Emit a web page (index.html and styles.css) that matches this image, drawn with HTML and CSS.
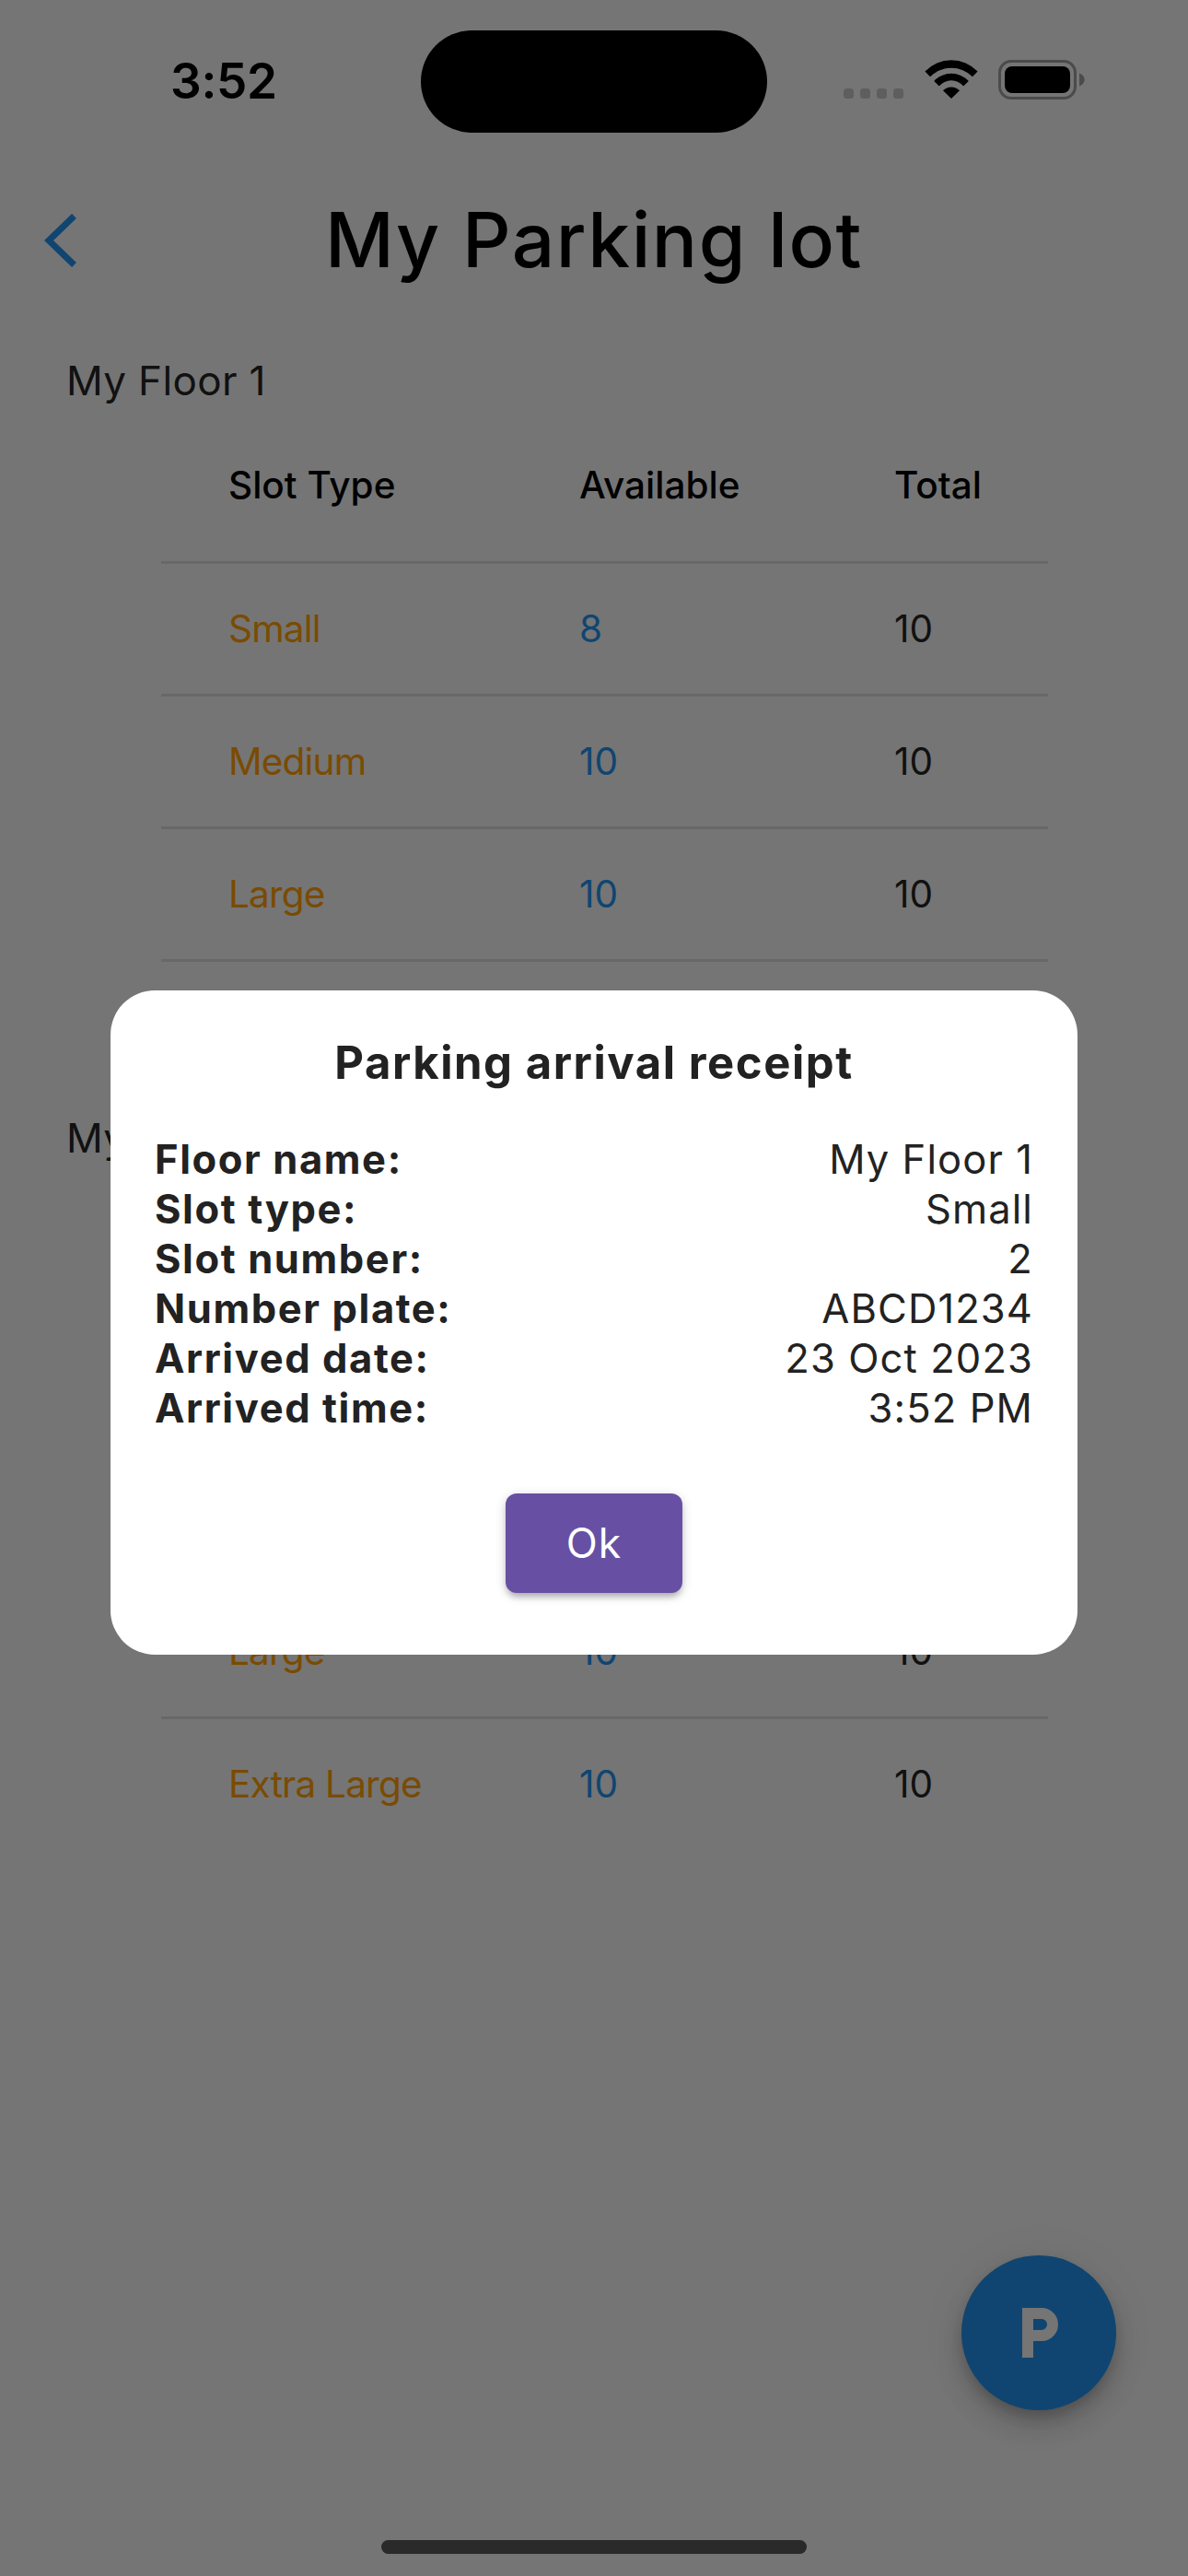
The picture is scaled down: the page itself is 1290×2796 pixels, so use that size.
FILE: index.html
```html
<!DOCTYPE html>
<html lang="en">
<head>
<meta charset="utf-8">
<title>My Parking lot</title>
<link rel="stylesheet" href="styles.css">
</head>
<body>
<div class="screen">
  <header class="status">
    <span class="clock">3:52</span>
    <span class="island"></span>
    <svg class="signal" width="70" height="20" viewBox="0 0 70 20"><g fill="#5e5e5e"><rect x="1" y="3" width="11" height="11" rx="3.5"/><rect x="19" y="3" width="11" height="11" rx="3.5"/><rect x="37" y="3" width="11" height="11" rx="3.5"/><rect x="55" y="3" width="11" height="11" rx="3.5"/></g></svg>
    <svg class="wifi" width="58" height="42" viewBox="0 0 58 42">
      <path d="M.4 12.6A39.2 39.2 0 0 1 57.6 12.6L52 18.3A32.6 32.6 0 0 0 6 18.3Z"/>
      <path d="M10.200 22.900A25.900 25.900 0 0 1 47.800 22.900L42.200 28.500A17.100 17.100 0 0 0 15.800 28.500Z"/>
      <path d="M20 33.300A12.500 12.500 0 0 1 38 33.300L29 42Z"/>
    </svg>
    <svg class="battery" width="96" height="44" viewBox="0 0 96 44">
      <rect x="1.5" y="1.5" width="82" height="40" rx="12.5" fill="none" stroke="#4b4b4b" stroke-width="3"/>
      <rect x="7" y="7" width="71" height="29" rx="8"/>
      <path d="M88 14.500c3.300 1.200 5.600 4 5.600 7s-2.300 5.800-5.600 7z" fill="#4b4b4b"/>
    </svg>
  </header>
  <nav class="bar">
    <svg class="back" width="36" height="60" viewBox="0 0 36 60"><path d="M32.500 3.500 5 30 32.500 56.500" fill="none" stroke="#104571" stroke-width="7"/></svg>
    <h1 class="title">My Parking lot</h1>
  </nav>
  <main class="floors">
    <section class="floor">
      <h2 class="floor-name">My Floor 1</h2>
      <div class="table">
        <div class="row head"><span>Slot Type</span><span>Available</span><span>Total</span></div>
        <div class="row"><span class="type">Small</span><span class="free">8</span><span>10</span></div>
        <div class="row"><span class="type">Medium</span><span class="free">10</span><span>10</span></div>
        <div class="row"><span class="type">Large</span><span class="free">10</span><span>10</span></div>
        <div class="row"></div>
      </div>
    </section>
    <section class="floor">
      <h2 class="floor-name">My</h2>
      <div class="table">
        <div class="row head"></div>
        <div class="row"></div>
        <div class="row"></div>
        <div class="row"><span class="type">Large</span><span class="free">10</span><span>10</span></div>
        <div class="row"><span class="type">Extra Large</span><span class="free">10</span><span>10</span></div>
      </div>
    </section>
  </main>
  <div class="fab">
    <svg width="72" height="72" viewBox="0 0 24 24"><rect x="6" y="3" width="4" height="18" fill="#757575"/><path d="M8 5h5a4 4 0 0 1 0 8H8" fill="none" stroke="#757575" stroke-width="4"/></svg>
  </div>
  <div class="home"></div>
  <div class="dialog">
    <h3 class="dialog-title">Parking arrival receipt</h3>
    <dl class="receipt">
      <div class="line"><dt>Floor name:</dt><dd>My Floor 1</dd></div>
      <div class="line"><dt>Slot type:</dt><dd>Small</dd></div>
      <div class="line"><dt>Slot number:</dt><dd>2</dd></div>
      <div class="line"><dt>Number plate:</dt><dd>ABCD1234</dd></div>
      <div class="line"><dt>Arrived date:</dt><dd>23 Oct 2023</dd></div>
      <div class="line"><dt>Arrived time:</dt><dd>3:52 PM</dd></div>
    </dl>
    <button class="ok">Ok</button>
  </div>
</div>
</body>
</html>
```
FILE: styles.css
```css
* { box-sizing: border-box; margin: 0; padding: 0; }

body { font-family: Inter, "Liberation Sans", sans-serif; color: #111; }

.screen {
  position: relative;
  width: 1290px;
  height: 2796px;
  overflow: hidden;
  background: #757575;
}

.status {
  display: grid;
  grid-template-columns: 457px 376px 152px 77px 1fr;
  height: 177px;
  align-items: start;
}
.clock {
  padding: 57px 0 0 185px;
  font-size: 53px;
  line-height: 62px;
  font-weight: 600;
  letter-spacing: -0.3px;
  color: #000;
}
.island { height: 111px; margin-top: 33px; border-radius: 56px; background: #000; }
.signal { margin-top: 93px; justify-self: end; }
.wifi { margin-top: 65px; justify-self: end; }
.battery { margin: 65px 0 0 22px; }

.bar { display: flex; align-items: center; height: 168px; padding-left: 48px; }
.back { flex: none; }
.title {
  flex: 1;
  padding-right: 84px;
  text-align: center;
  font-size: 82px;
  line-height: 100px;
  font-weight: 500;
  letter-spacing: 1.5px;
  color: #000;
}

.floors { padding-top: 36px; }
.floor { height: 822px; }
.floor-name {
  padding-left: 72px;
  font-size: 44px;
  line-height: 64px;
  font-weight: 400;
  letter-spacing: 0.35px;
}
.table { width: 963px; margin: 20px 0 0 175px; }
.row {
  display: grid;
  grid-template-columns: 381px 342px 1fr;
  align-items: center;
  height: 144px;
  padding-left: 73px;
  border-top: 3px solid #686868;
  font-size: 40.5px;
}
.row.head { padding-bottom: 21px; border-top: 0; font-weight: 500; color: #000; letter-spacing: 0; }
.type { color: #7a4b00; letter-spacing: -0.8px; }
.free { color: #104571; }

.fab {
  position: absolute;
  left: 1044px;
  top: 2448px;
  display: grid;
  place-items: center;
  width: 168px;
  height: 168px;
  border-radius: 50%;
  background: #104571;
  box-shadow: 0 9px 15px -3px rgba(0,0,0,.2), 0 18px 30px rgba(0,0,0,.14), 0 3px 54px rgba(0,0,0,.06);
}

.home {
  position: absolute;
  left: 414px;
  top: 2757px;
  width: 462px;
  height: 15px;
  border-radius: 8px;
  background: #2a2a2a;
}

.dialog {
  position: absolute;
  left: 120px;
  top: 1075px;
  display: flex;
  flex-direction: column;
  width: 1050px;
  height: 721px;
  padding: 48px;
  border-radius: 48px;
  background: #fff;
  color: #222;
}
.dialog-title {
  text-align: center;
  font-size: 49px;
  line-height: 62px;
  font-weight: 700;
  letter-spacing: 1.55px;
}
.receipt { margin-top: 46px; }
.line { display: flex; justify-content: space-between; font-size: 43.5px; line-height: 54px; letter-spacing: 1.1px; }
.line dt { font-weight: 700; letter-spacing: 1.6px; }
.ok {
  align-self: center;
  width: 192px;
  height: 108px;
  margin-top: 66px;
  border: 0;
  border-radius: 12px;
  background: #6750a4;
  color: #fff;
  font: 400 44.5px Inter, "Liberation Sans", sans-serif;
  letter-spacing: 1px;
  box-shadow: 0 6px 6px -2px rgba(0,0,0,.2), 0 3px 12px rgba(0,0,0,.2);
}
```
